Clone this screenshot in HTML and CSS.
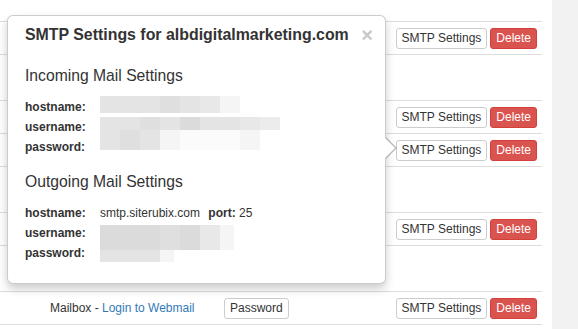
FILE: index.html
```html
<!doctype html>
<html>
<head>
<meta charset="UTF-8">
<title>Email Accounts</title>
<link rel="stylesheet" href="styles.css">
</head>
<body>
<div class="page">
  <div class="main">
    <div class="table">
      <div class="row first"></div>
      <div class="row">
        <div class="actions"><button class="btn">SMTP Settings</button><button class="btn btn-danger">Delete</button></div>
      </div>
      <div class="row tall"></div>
      <div class="row">
        <div class="actions"><button class="btn">SMTP Settings</button><button class="btn btn-danger">Delete</button></div>
      </div>
      <div class="row">
        <div class="actions"><button class="btn">SMTP Settings</button><button class="btn btn-danger">Delete</button></div>
      </div>
      <div class="row tall"></div>
      <div class="row">
        <div class="actions"><button class="btn">SMTP Settings</button><button class="btn btn-danger">Delete</button></div>
      </div>
      <div class="row tall"></div>
      <div class="row">
        <div class="name">Mailbox - <a href="#">Login to Webmail</a></div>
        <div class="pass"><button class="btn">Password</button></div>
        <div class="actions"><button class="btn">SMTP Settings</button><button class="btn btn-danger">Delete</button></div>
      </div>
      <div class="row last"></div>
    </div>

    <div class="popover">
      <div class="popover-title">SMTP Settings for albdigitalmarketing.com <span class="close">&times;</span></div>
      <div class="popover-content">
        <h4 class="section in">Incoming Mail Settings</h4>
        <div class="creds">
          <b>hostname:</b>
          <span class="mosaic m-host"><i class="s4"></i><i class="s4"></i><i class="s4"></i><i class="s5"></i><i class="s4"></i><i class="s3"></i><i class="s1"></i></span>
          <b>username:</b>
          <span class="mosaic m-user"><i class="s4"></i><i class="s4"></i><i class="s5"></i><i class="s4"></i><i class="s6"></i><i class="s4"></i><i class="s4"></i><i class="s3"></i><i class="s2"></i></span>
          <b>password:</b>
          <span class="mosaic m-pass"><i class="s4"></i><i class="s5"></i><i class="s4"></i><i class="s1"></i><i class="s0"></i><i class="s0"></i><i class="s0"></i><i class="s1"></i></span>
        </div>
        <h4 class="section out">Outgoing Mail Settings</h4>
        <div class="creds out">
          <b>hostname:</b>
          <span>smtp.siterubix.com <b class="port">port:</b> 25</span>
          <b>username:</b>
          <span class="mosaic m-user2"><i class="s6"></i><i class="s6"></i><i class="s6"></i><i class="s5"></i><i class="s6"></i><i class="s3"></i><i class="s1 half"></i></span>
          <b>password:</b>
          <span class="mosaic m-pass2"><i class="s4"></i><i class="s4"></i><i class="s4"></i><i class="s1 half"></i></span>
        </div>
      </div>
    </div>
  </div>
  <div class="sidebar"></div>
</div>
</body>
</html>
```

FILE: styles.css
```css
html,body{margin:0;padding:0;}
body{font:normal 12px/1.5 "Liberation Sans",Arial,sans-serif;color:#333;background:#fff;}
a{color:#337ab7;text-decoration:none;}

.page{display:flex;height:329px;overflow:hidden;}
.main{position:relative;width:552px;}
.sidebar{flex:1;background:#f2f2f2;}

.table{width:542px;}
.row{display:flex;align-items:center;box-sizing:border-box;height:33px;border-top:1px solid #ddd;}
.row.first{height:21px;border-top:0;}
.row.tall{height:46px;}
.row.last{height:10px;}
.name{width:174px;padding-left:50px;color:#333;}
.actions{margin-left:auto;padding-right:5px;display:flex;gap:3px;}

.btn{font:inherit;font-size:12px;line-height:17px;padding:1px 5px;border:1px solid #ccc;border-radius:3px;background:#fff;color:#333;margin:0;}
.btn-danger{background:#d9534f;border-color:#d43f3a;color:#fff;}

.popover{position:absolute;left:7px;top:15px;width:379px;box-sizing:border-box;background:#fff;border:1px solid rgba(0,0,0,.2);border-radius:6px;box-shadow:0 5px 10px rgba(0,0,0,.2);}
.popover::before,.popover::after{content:"";position:absolute;width:0;height:0;border-style:solid;border-color:transparent;}
.popover::before{right:-12px;top:121px;border-width:11px 0 11px 11px;border-left-color:rgba(0,0,0,.25);}
.popover::after{right:-10px;top:122px;border-width:10px 0 10px 10px;border-left-color:#fff;}

.popover-title{padding:9px 12px 0 17px;font-size:15.9px;line-height:20px;font-weight:bold;color:#333;display:flex;justify-content:space-between;}
.close{font-size:20px;line-height:20px;color:#c8c8c8;font-weight:bold;}
.popover-content{padding:0 16px 20px 17px;}

.section{margin:21px 0 0;font-size:15.7px;line-height:20px;font-weight:normal;color:#333;}
.section.out{margin-top:15px;}
.creds{display:grid;grid-template-columns:75px 1fr;grid-auto-rows:20px;line-height:20px;margin-top:11px;}
.creds.out{margin-top:11px;}
.port{margin-left:5px;}

.mosaic{display:flex;align-self:start;}
.mosaic i{display:block;width:20px;height:100%;}
.mosaic i.half{width:14px;}
.m-host{height:17px;margin-top:-1px;}
.m-user{height:13px;}
.m-pass{height:20px;margin-top:-7px;}
.m-user2{height:25px;margin-top:2px;}
.m-pass2{height:12px;margin-top:7px;}
.s0{background:#fbfbfb;}
.s1{background:#f5f5f6;}
.s2{background:#ececec;}
.s3{background:#e8e8e8;}
.s4{background:#e4e4e4;}
.s5{background:#dfdfdf;}
.s6{background:#dbdbdb;}
```
